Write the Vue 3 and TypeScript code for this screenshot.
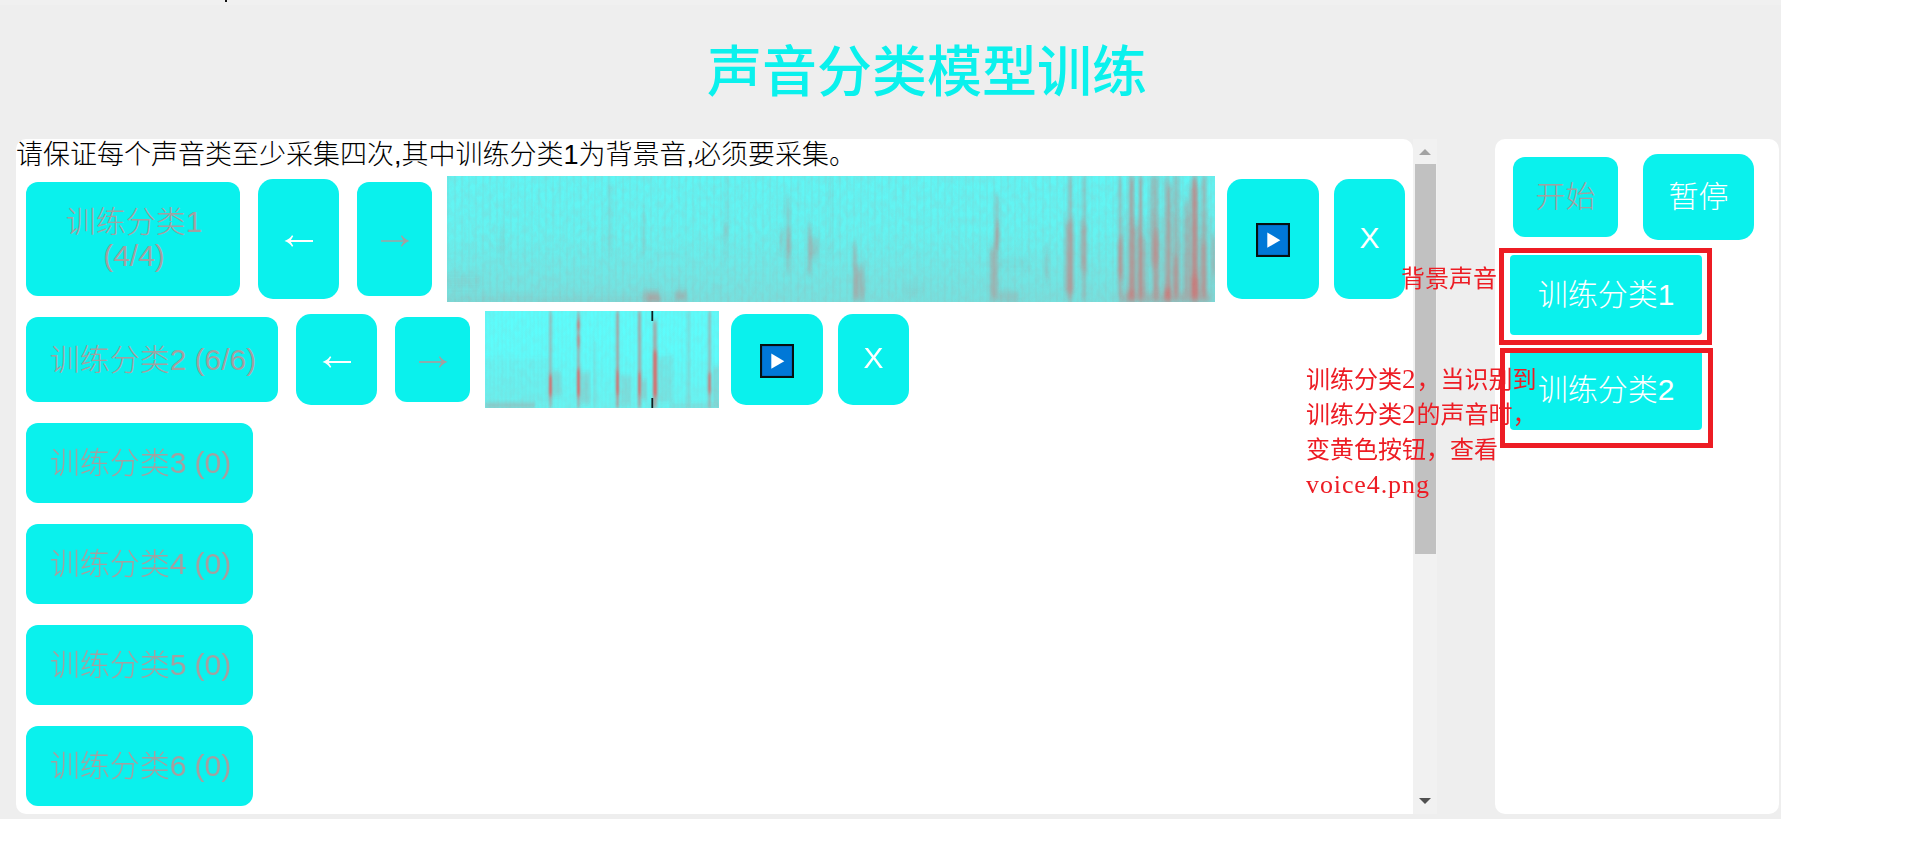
<script setup lang="ts">
interface Streak { x: number; w: number; y: number; h: number; o: number }
interface Spectrum { width: number; height: number; noise: number; strength: number; blur: string; streaks: Streak[]; cursor?: number }
interface Track { name: string; count: string; size: string; spectrum?: Spectrum }

const s = (x: number, w: number, y: number, h: number, o: number): Streak => ({ x, w, y, h, o })

const background: Spectrum = {
  width: 768, height: 126, noise: 0.26, strength: 0.72, blur: '1.5 4',
  streaks: [
    s(0, 34, 101, 8, 0.14), s(0, 230, 121, 5, 0.14), s(53, 4, 52, 30, 0.13), s(161, 4, 10, 70, 0.14), s(195, 3, 35, 44, 0.15),
    s(196, 16, 115, 11, 0.35), s(200, 14, 121, 4, 0.8), s(228, 12, 118, 4, 0.9),
    s(277, 3, 0, 85, 0.14), s(277, 5, 48, 14, 0.2), s(333, 3, 54, 20, 0.35), s(339, 4, 20, 76, 0.25), s(339, 5, 55, 25, 0.3),
    s(361, 3, 50, 47, 0.45), s(362, 10, 62, 20, 0.28), s(382, 3, 0, 80, 0.12),
    s(406, 4, 68, 54, 0.35), s(408, 10, 90, 34, 0.34), s(457, 18, 111, 5, 0.15),
    s(543, 8, 70, 54, 0.4), s(548, 4, 20, 52, 0.35), s(548, 4, 48, 24, 0.5), s(544, 40, 86, 3, 0.25), s(552, 20, 118, 6, 0.4),
    s(598, 3, 74, 30, 0.3), s(618, 9, 44, 74, 0.42), s(621, 4, 0, 125, 0.4), s(635, 4, 0, 124, 0.32), s(633, 7, 46, 50, 0.35),
    s(671, 4, 0, 124, 0.35), s(671, 5, 62, 40, 0.5), s(682, 5, 0, 126, 0.6), s(684, 8, 50, 70, 0.3), s(692, 3, 0, 124, 0.65),
    s(692, 7, 60, 65, 0.35), s(703, 9, 0, 90, 0.4), s(706, 6, 55, 70, 0.5), s(717, 5, 0, 126, 0.35), s(720, 4, 10, 116, 0.45),
    s(725, 8, 0, 120, 0.33), s(727, 4, 80, 40, 0.45), s(737, 5, 25, 95, 0.38), s(745, 5, 0, 126, 0.7), s(741, 11, 10, 110, 0.28),
    s(754, 6, 0, 120, 0.38), s(753, 6, 65, 55, 0.35), s(673, 90, 120, 5, 0.6), s(765, 3, 60, 40, 0.45), s(673, 95, 40, 86, 0.1),
    s(680, 6, 115, 10, 0.6), s(717, 7, 112, 14, 0.8), s(744, 8, 100, 22, 0.6)
  ]
}

const sample: Spectrum = {
  width: 234, height: 97, noise: 0.16, strength: 0.95, blur: '0.9 2.6', cursor: 166,
  streaks: [
    s(64, 3, 0, 97, 0.35), s(64, 3, 64, 21, 0.85), s(68, 8, 60, 25, 0.16),
    s(92, 3, 0, 97, 0.4), s(92, 3, 9, 10, 0.6), s(92, 3, 24, 12, 0.5), s(92, 3, 58, 27, 0.85), s(96, 9, 62, 30, 0.16),
    s(109, 2, 30, 67, 0.16), s(131, 3, 0, 97, 0.5), s(131, 3, 60, 24, 0.7), s(136, 10, 64, 30, 0.14),
    s(153, 3, 0, 97, 0.5), s(153, 3, 62, 22, 0.7), s(157, 5, 68, 20, 0.18),
    s(168, 4, 10, 87, 0.45), s(168, 4, 40, 45, 0.7), s(172, 16, 45, 45, 0.1), s(202, 3, 0, 97, 0.16),
    s(223, 3, 0, 97, 0.35), s(223, 3, 62, 20, 0.65), s(228, 6, 55, 40, 0.16),
    s(0, 50, 93, 3, 0.45), s(0, 65, 46, 48, 0.04), s(185, 49, 94, 3, 0.2)
  ]
}

const tracks: Track[] = [
  { name: '训练分类1', count: '(4/4)', size: 'large', spectrum: background },
  { name: '训练分类2', count: '(6/6)', size: 'medium', spectrum: sample },
  { name: '训练分类3', count: '(0)', size: 'small' },
  { name: '训练分类4', count: '(0)', size: 'small' },
  { name: '训练分类5', count: '(0)', size: 'small' },
  { name: '训练分类6', count: '(0)', size: 'small' }
]
const results = ['训练分类1', '训练分类2']
</script>

<template>
  <div class="page">
    <div class="strip"><i class="tick"></i></div>
    <h1>声音分类模型训练</h1>
    <div class="columns">
      <section class="trainer">
        <p class="hint">请保证每个声音类至少采集四次,其中训练分类1为背景音,必须要采集。</p>
        <div v-for="(t, i) in tracks" :key="t.name" class="row" :class="t.size">
          <button class="btn name" disabled><span>{{ t.name }}</span> <span>{{ t.count }}</span></button>
          <template v-if="t.spectrum">
            <button class="btn prev">
              <svg width="30" height="14" viewBox="0 0 30 14"><path d="M3 7H29" stroke="currentColor" stroke-width="2" /><path d="M0.5 7Q6 5 8 1.3L9.3 2Q7.4 5.3 6.2 7Q7.4 8.7 9.3 12L8 12.7Q6 9 .5 7Z" fill="currentColor" /></svg>
            </button>
            <button class="btn next" disabled>
              <svg width="30" height="14" viewBox="0 0 30 14"><path d="M1 7H27" stroke="currentColor" stroke-width="1.7" /><path d="M29.5 7Q24 5 22 1.3L20.9 2Q22.6 5.3 24 7Q22.6 8.7 20.9 12L22 12.7Q24 9 29.5 7Z" fill="currentColor" /></svg>
            </button>
            <svg class="spectrum" :width="t.spectrum.width" :height="t.spectrum.height">
              <defs>
                <linearGradient :id="'base' + i" x1="0" y1="0" x2="0" y2="1">
                  <stop offset="0" :stop-color="i ? '#5cfdfc' : '#60f6f5'" />
                  <stop offset=".45" :stop-color="i ? '#5dfcfb' : '#64f3f1'" />
                  <stop offset="1" :stop-color="i ? '#68f3f1' : '#76e0de'" />
                </linearGradient>
                <pattern :id="'lines' + i" :width="i ? 4 : 7" height="10" patternUnits="userSpaceOnUse">
                  <rect width="2" height="10" fill="#8bbdbb" :opacity="i ? 0.06 : 0.13" />
                </pattern>
                <filter :id="'soft' + i" x="-5%" y="-5%" width="110%" height="110%"><feGaussianBlur :stdDeviation="t.spectrum.blur" /></filter>
                <filter :id="'grain' + i" x="0" y="0" width="100%" height="100%" color-interpolation-filters="sRGB">
                  <feTurbulence type="fractalNoise" baseFrequency="0.2 0.12" numOctaves="4" seed="8" />
                  <feColorMatrix values="0 0 0 0 .62  0 0 0 0 .7  0 0 0 0 .7  1.5 0 0 0 -.5" />
                </filter>
              </defs>
              <rect width="100%" height="100%" :fill="`url(#base${i})`" />
              <rect width="100%" height="100%" :fill="`url(#lines${i})`" />
              <rect width="100%" height="100%" :filter="`url(#grain${i})`" :opacity="t.spectrum.noise" />
              <g :filter="`url(#soft${i})`" fill="#f04f4f" :opacity="t.spectrum.strength">
                <rect v-for="(k, n) in t.spectrum.streaks" :key="n" :x="k.x" :y="k.y" :width="k.w" :height="k.h" :opacity="k.o" />
              </g>
              <path v-if="t.spectrum.cursor" :d="`M${t.spectrum.cursor + 1.3} 0v10m0 77v10`" stroke="#102020" stroke-width="1.8" />
            </svg>
            <button class="btn play">
              <svg width="34" height="34" viewBox="0 0 34 34"><rect x="1" y="1" width="32" height="32" fill="#0078d7" stroke="#06100f" stroke-width="2.2" /><path d="M11.3 9.5V24.8L24.3 17.2Z" fill="#fff" /></svg>
            </button>
            <button class="btn remove">X</button>
          </template>
        </div>
      </section>
      <div class="scrollbar">
        <svg class="up" width="12" height="6"><path d="M0 6L6 0L12 6Z" fill="#a3a3a3" /></svg>
        <div class="thumb"></div>
        <svg class="down" width="12" height="6"><path d="M0 0H12L6 6Z" fill="#505050" /></svg>
      </div>
      <aside class="results">
        <div class="controls">
          <button class="btn start" disabled>开始</button>
          <button class="btn pause">暂停</button>
        </div>
        <button v-for="r in results" :key="r" class="btn result">{{ r }}</button>
      </aside>
    </div>
    <div class="frame first"></div>
    <div class="frame second"></div>
    <p class="note one">背景声音</p>
    <p class="note two">训练分类<span class="digit">2</span>，当识别到<br />训练分类<span class="digit">2</span>的声音时，<br />变黄色按钮，查看<br /><span class="file">voice4.png</span></p>
  </div>
</template>

<style>
body { margin: 0; background: #fff; overflow: hidden; }
</style>

<style scoped>
* { box-sizing: border-box; }
.page { position: relative; width: 1781px; height: 819px; background: #eee; font-family: "Liberation Sans", "Noto Sans CJK SC", sans-serif; overflow: hidden; }
.strip { height: 5px; background: #f0f0f0; }
.tick { display: block; width: 2px; height: 2px; margin-left: 225px; background: #111; }
h1 { margin: 0; height: 134px; padding: 27px 0 0 707px; font-size: 55px; line-height: 80px; font-weight: 500; color: #0af1ed; white-space: nowrap; }
.columns { display: flex; height: 675px; }
.trainer { width: 1397px; margin-left: 16px; background: #fff; border-radius: 10px 10px 0 10px; overflow: hidden; }
.hint { margin: 0 0 6px; height: 31px; font-size: 27px; line-height: 33px; font-weight: 300; color: #000; white-space: nowrap; }
.row { display: flex; align-items: center; padding-left: 10px; margin-bottom: 21px; }
.btn { display: flex; align-items: center; justify-content: center; flex: none; padding: 0; border: 0; background: #0af1ed; color: #fff; border-radius: 15px; font-family: inherit; font-weight: 300; font-size: 30px; line-height: 34px; white-space: pre; }
.btn:disabled { color: #a3a0a0; border-radius: 12px; }
.name { width: 227px; height: 80px; gap: 8px; padding-left: 2px; }
.large { height: 126px; margin-bottom: 9px; }
.large .name { width: 214px; height: 114px; flex-direction: column; gap: 0; }
.medium { height: 97px; margin-bottom: 15px; }
.medium .name { width: 252px; height: 85px; }
.prev { width: 81px; height: 120px; margin-left: 18px; }
.next { width: 75px; height: 114px; margin-left: 18px; }
.medium .prev, .medium .play, .medium .remove { height: 91px; }
.medium .next { height: 85px; }
.prev svg, .next svg { margin-top: 4px; }
.spectrum { display: block; flex: none; margin-left: 15px; }
.play { width: 92px; height: 120px; margin-left: 12px; }
.play svg { margin-top: 2px; }
.remove { width: 71px; height: 120px; margin-left: 15px; padding-bottom: 3px; }
.scrollbar { display: flex; flex-direction: column; align-items: center; width: 24px; background: #f1f1f1; }
.up { margin-top: 10px; }
.thumb { width: 21px; height: 390px; margin-top: 9px; background: #c1c1c1; }
.down { margin-top: auto; margin-bottom: 10px; }
.results { width: 284px; margin-left: 58px; padding: 15px 0 0 15px; background: #fff; border-radius: 10px; }
.controls { display: flex; align-items: center; margin-bottom: 15px; padding-left: 3px; }
.start { width: 105px; height: 80px; }
.pause { width: 111px; height: 86px; margin-left: 25px; }
.result { width: 192px; height: 80px; border-radius: 4px; margin-bottom: 15px; }
.frame { position: absolute; border: 5px solid #ed1c24; }
.first { left: 1499px; top: 248px; width: 213px; height: 97px; }
.second { left: 1500px; top: 348px; width: 213px; height: 100px; }
.note { position: absolute; margin: 0; font-family: "Liberation Serif", "Noto Sans CJK SC", serif; font-size: 24px; line-height: 35px; color: #ed1c24; white-space: nowrap; }
.one { left: 1401px; top: 262px; }
.two { left: 1306px; top: 363px; }
.digit { display: inline-block; width: 14.5px; font-size: 27px; line-height: 1; }
.file { display: block; font-size: 26px; letter-spacing: 0.9px; line-height: 33px; }
</style>
